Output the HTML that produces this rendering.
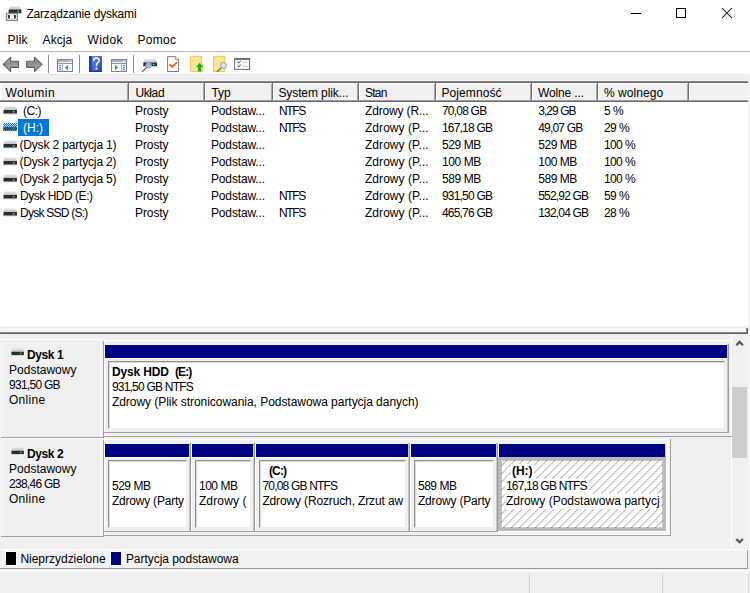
<!DOCTYPE html>
<html lang="pl"><head><meta charset="utf-8"><title>Zarządzanie dyskami</title>
<style>
html,body{margin:0;padding:0;}
body{width:750px;height:593px;position:relative;overflow:hidden;background:#fff;font-family:"Liberation Sans",sans-serif;font-size:12px;line-height:14px;color:#000;}
body div,body svg,body span{position:absolute;display:block;}
.t{white-space:pre;height:14px;}
</style></head><body>
<svg style="left:5px;top:5px" width="18" height="17" viewBox="0 0 18 17">
<defs><linearGradient id="tg" x1="0" y1="0" x2="0" y2="1"><stop offset="0" stop-color="#e4e7ea"/><stop offset="1" stop-color="#b9bec4"/></linearGradient></defs>
<path d="M5 1.2 L14.6 1.2 L16.3 4.8 L3.6 4.8 Z" fill="url(#tg)"/>
<rect x="3.6" y="4.6" width="12.8" height="3.6" rx="0.5" fill="#2e2e2e"/>
<rect x="3.6" y="8.1" width="12.8" height="0.7" fill="#c8ccd0"/>
<circle cx="13.4" cy="6.4" r="0.95" fill="#35e23a"/>
<rect x="1.3" y="8.3" width="11.2" height="7.2" fill="#dcdcdc" stroke="#858585" stroke-width="1.1"/>
<rect x="3.0" y="10.1" width="1.9" height="3.3" fill="#2a2a2a"/>
<rect x="8.9" y="10.1" width="1.9" height="3.3" fill="#2a2a2a"/>
<rect x="4.9" y="10.6" width="4" height="2.3" fill="#f6f6f6"/>
</svg>
<svg style="left:620px;top:0px" width="130" height="30" viewBox="0 0 130 30">
<path d="M11 13.5 H21" stroke="#000" stroke-width="1" fill="none"/>
<rect x="56.5" y="8.5" width="9" height="9" stroke="#000" stroke-width="1" fill="none"/>
<path d="M102 8 L112 18 M112 8 L102 18" stroke="#000" stroke-width="1.05" fill="none"/>
</svg>
<div style="left:0px;top:51px;width:750px;height:1px;background:#b9b9b9;"></div>
<div style="left:0px;top:74px;width:750px;height:8px;background:#f0f0f0;"></div>
<div style="left:0px;top:74px;width:750px;height:1px;background:#e6e6e6;"></div>
<div style="left:48px;top:55px;width:1px;height:18px;background:#8d8d8d;"></div>
<div style="left:79px;top:55px;width:1px;height:18px;background:#8d8d8d;"></div>
<div style="left:133px;top:55px;width:1px;height:18px;background:#8d8d8d;"></div>
<svg style="left:0px;top:52px" width="260" height="22" viewBox="0 0 260 22">
<defs>
<linearGradient id="ag" x1="0" y1="0" x2="0.3" y2="1"><stop offset="0" stop-color="#cfcfcf"/><stop offset="0.5" stop-color="#8c8c8c"/><stop offset="1" stop-color="#b0b0b0"/></linearGradient>
<linearGradient id="hg" x1="0" y1="0" x2="1" y2="1"><stop offset="0" stop-color="#7396ec"/><stop offset="0.5" stop-color="#4a6cd6"/><stop offset="1" stop-color="#2443ae"/></linearGradient>
<linearGradient id="dtg" x1="0" y1="0" x2="0" y2="1"><stop offset="0" stop-color="#e6e9ec"/><stop offset="1" stop-color="#bfc4c9"/></linearGradient>
</defs>
<!-- back / forward arrows -->
<path d="M3.3 12.3 L10.6 5.3 L10.6 9.2 L18 9.2 Q18.5 9.2 18.5 9.7 L18.5 14.9 Q18.5 15.4 18 15.4 L10.6 15.4 L10.6 19.4 Z" fill="url(#ag)" stroke="#5e5e5e" stroke-width="1.15" stroke-linejoin="round"/>
<path d="M41.9 12.3 L34.6 5.3 L34.6 9.2 L27.2 9.2 Q26.7 9.2 26.7 9.7 L26.7 14.9 Q26.7 15.4 27.2 15.4 L34.6 15.4 L34.6 19.4 Z" fill="url(#ag)" stroke="#5e5e5e" stroke-width="1.15" stroke-linejoin="round"/>
<!-- icon 1: console tree -->
<g>
<rect x="57.5" y="7.5" width="15" height="12" fill="#fff" stroke="#7d8693" stroke-width="1"/>
<rect x="58" y="8" width="14" height="2" fill="#aeb4bd"/>
<rect x="58" y="10.2" width="14" height="0.9" fill="#e9ecef"/>
<rect x="58" y="11" width="14" height="1" fill="#8d95a1"/>
<rect x="58" y="12" width="4.2" height="7" fill="#eef1f5"/>
<rect x="62.2" y="12" width="0.9" height="7" fill="#9aa2ad"/>
<rect x="59" y="13.2" width="2.2" height="1" fill="#3f7fd6"/><rect x="59" y="15.2" width="2.2" height="1" fill="#3f7fd6"/><rect x="59" y="17.2" width="2.2" height="1" fill="#3f7fd6"/>
<rect x="69" y="8.4" width="1" height="1" fill="#fff"/><rect x="70.8" y="8.4" width="1" height="1" fill="#fff"/>
<path d="M64.7 15.6 L68 12.8 L68 18.4 Z" fill="#3db53d"/>
</g>
<!-- help -->
<rect x="89" y="4" width="13" height="16" fill="url(#hg)"/>
<rect x="89" y="4" width="2.8" height="16" fill="#1f3fa3"/>
<rect x="89" y="19.2" width="13" height="0.8" fill="#1c3488"/>
<path d="M93.8 8.3 Q93.9 6 96.4 6 Q99 6 99 8.4 Q99 9.9 97.6 10.9 Q96.5 11.7 96.5 13.6" stroke="#f6f8ff" stroke-width="1.55" fill="none" stroke-linecap="round"/>
<circle cx="96.4" cy="16.6" r="1.15" fill="#fff"/>
<!-- icon 3 -->
<g>
<rect x="111.5" y="7.5" width="15" height="12" fill="#fff" stroke="#7d8693" stroke-width="1"/>
<rect x="112" y="8" width="14" height="2" fill="#aeb4bd"/>
<rect x="112" y="10.2" width="14" height="0.9" fill="#e9ecef"/>
<rect x="112" y="11" width="14" height="1" fill="#8d95a1"/>
<rect x="121.8" y="12" width="4.2" height="7" fill="#eef1f5"/>
<rect x="120.9" y="12" width="0.9" height="7" fill="#9aa2ad"/>
<rect x="122.8" y="13.2" width="2.2" height="1" fill="#3f7fd6"/><rect x="122.8" y="15.2" width="2.2" height="1" fill="#3f7fd6"/><rect x="122.8" y="17.2" width="2.2" height="1" fill="#3f7fd6"/>
<rect x="123" y="8.4" width="1" height="1" fill="#fff"/><rect x="124.8" y="8.4" width="1" height="1" fill="#fff"/>
<path d="M118.3 15.6 L115 12.8 L115 18.4 Z" fill="#3db53d"/>
</g>
<!-- icon 4: drive + magnifier -->
<path d="M144.4 7 L156 7 L157.2 10.8 L143.2 10.8 Z" fill="url(#dtg)"/>
<rect x="143.3" y="10.6" width="13.8" height="3.7" rx="0.4" fill="#2c2c2c"/>
<rect x="143.3" y="14.2" width="13.8" height="0.7" fill="#c9cdd1"/>
<circle cx="153.7" cy="12.4" r="1" fill="#2fe135"/>
<path d="M146.7 15.4 L142.4 19.6" stroke="#4f6070" stroke-width="1.3" stroke-linecap="round"/>
<circle cx="148.7" cy="13.2" r="2.9" fill="#9fc0df" fill-opacity="0.92" stroke="#6f8fb0" stroke-width="0.8"/>
<!-- icon 5: doc + check -->
<path d="M167.6 4.7 L175.6 4.7 L178.6 7.7 L178.6 19.5 L167.6 19.5 Z" fill="#fafafa" stroke="#7b7b7b" stroke-width="1"/>
<path d="M175.6 4.7 L175.6 7.7 L178.6 7.7" fill="#fff" stroke="#7b7b7b" stroke-width="0.8"/>
<path d="M169.6 12.4 L172.1 14.9 L177 10.4" stroke="#e8581d" stroke-width="1.7" fill="none"/>
<!-- icon 6: yellow page + green arrow -->
<path d="M190.4 4.3 L201.6 4.3 L201.6 12 L202.7 12 L202.7 19.5 L190.4 19.5 Z" fill="#ffe593" stroke="#e9c24a" stroke-width="0.9"/>
<path d="M199.6 10.8 L203.2 15 L201.3 15 L201.3 19.6 L197.9 19.6 L197.9 15 L196 15 Z" fill="#19b51b"/>
<!-- icon 7: yellow page + magnifier -->
<path d="M213.6 4.3 L224.8 4.3 L224.8 19.5 L213.6 19.5 Z" fill="#ffe593" stroke="#e9c24a" stroke-width="0.9"/>
<path d="M221.4 15.6 L217.3 19.5" stroke="#5d6c7a" stroke-width="1.2" stroke-linecap="round"/>
<circle cx="223.5" cy="13.4" r="3" fill="#d3e6f5" stroke="#8c9baa" stroke-width="0.9"/>
<!-- icon 8: checklist -->
<rect x="234.6" y="6.6" width="15" height="10.8" fill="#fff" stroke="#6c6c6c" stroke-width="1"/>
<rect x="234.6" y="6.4" width="15" height="1.6" fill="#6c6c6c"/>
<path d="M237.6 9.6 L238.8 10.8 L240.8 8.8" stroke="#2d7fe0" stroke-width="1.1" fill="none"/>
<path d="M237.6 13.6 L238.8 14.8 L240.8 12.8" stroke="#2d7fe0" stroke-width="1.1" fill="none"/>
<path d="M242.4 10.3 H247.4 M242.4 14.3 H247.4" stroke="#b8b8b8" stroke-width="0.9"/>
</svg>

<div style="left:0px;top:81px;width:748px;height:1px;background:#8c8c8c;"></div>
<div style="left:0px;top:82px;width:748px;height:1px;background:#636363;"></div>
<div style="left:748px;top:74px;width:2px;height:260px;background:#f0f0f0;"></div>
<div style="left:1px;top:83px;width:128px;height:18px;background:#f0f0f0;"></div>
<div style="left:1px;top:83px;width:127px;height:1px;background:#fff;"></div>
<div style="left:1px;top:83px;width:1px;height:17px;background:#fff;"></div>
<div style="left:128px;top:83px;width:1px;height:18px;background:#6f6f6f;"></div>
<div style="left:127px;top:84px;width:1px;height:16px;background:#a6a6a6;"></div>
<div style="left:129px;top:83px;width:76px;height:18px;background:#f0f0f0;"></div>
<div style="left:129px;top:83px;width:75px;height:1px;background:#fff;"></div>
<div style="left:129px;top:83px;width:1px;height:17px;background:#fff;"></div>
<div style="left:204px;top:83px;width:1px;height:18px;background:#6f6f6f;"></div>
<div style="left:203px;top:84px;width:1px;height:16px;background:#a6a6a6;"></div>
<div style="left:205px;top:83px;width:68px;height:18px;background:#f0f0f0;"></div>
<div style="left:205px;top:83px;width:67px;height:1px;background:#fff;"></div>
<div style="left:205px;top:83px;width:1px;height:17px;background:#fff;"></div>
<div style="left:272px;top:83px;width:1px;height:18px;background:#6f6f6f;"></div>
<div style="left:271px;top:84px;width:1px;height:16px;background:#a6a6a6;"></div>
<div style="left:273px;top:83px;width:86px;height:18px;background:#f0f0f0;"></div>
<div style="left:273px;top:83px;width:85px;height:1px;background:#fff;"></div>
<div style="left:273px;top:83px;width:1px;height:17px;background:#fff;"></div>
<div style="left:358px;top:83px;width:1px;height:18px;background:#6f6f6f;"></div>
<div style="left:357px;top:84px;width:1px;height:16px;background:#a6a6a6;"></div>
<div style="left:359px;top:83px;width:77px;height:18px;background:#f0f0f0;"></div>
<div style="left:359px;top:83px;width:76px;height:1px;background:#fff;"></div>
<div style="left:359px;top:83px;width:1px;height:17px;background:#fff;"></div>
<div style="left:435px;top:83px;width:1px;height:18px;background:#6f6f6f;"></div>
<div style="left:434px;top:84px;width:1px;height:16px;background:#a6a6a6;"></div>
<div style="left:436px;top:83px;width:96px;height:18px;background:#f0f0f0;"></div>
<div style="left:436px;top:83px;width:95px;height:1px;background:#fff;"></div>
<div style="left:436px;top:83px;width:1px;height:17px;background:#fff;"></div>
<div style="left:531px;top:83px;width:1px;height:18px;background:#6f6f6f;"></div>
<div style="left:530px;top:84px;width:1px;height:16px;background:#a6a6a6;"></div>
<div style="left:532px;top:83px;width:66px;height:18px;background:#f0f0f0;"></div>
<div style="left:532px;top:83px;width:65px;height:1px;background:#fff;"></div>
<div style="left:532px;top:83px;width:1px;height:17px;background:#fff;"></div>
<div style="left:597px;top:83px;width:1px;height:18px;background:#6f6f6f;"></div>
<div style="left:596px;top:84px;width:1px;height:16px;background:#a6a6a6;"></div>
<div style="left:598px;top:83px;width:91px;height:18px;background:#f0f0f0;"></div>
<div style="left:598px;top:83px;width:90px;height:1px;background:#fff;"></div>
<div style="left:598px;top:83px;width:1px;height:17px;background:#fff;"></div>
<div style="left:688px;top:83px;width:1px;height:18px;background:#6f6f6f;"></div>
<div style="left:687px;top:84px;width:1px;height:16px;background:#a6a6a6;"></div>
<div style="left:689px;top:83px;width:59px;height:18px;background:#f0f0f0;"></div>
<div style="left:689px;top:83px;width:58px;height:1px;background:#fff;"></div>
<div style="left:689px;top:83px;width:1px;height:17px;background:#fff;"></div>
<div style="left:0px;top:100px;width:748px;height:1px;background:#a0a0a0;"></div>
<div style="left:0px;top:101px;width:748px;height:1px;background:#6a6a6a;"></div>
<svg style="left:2.7px;top:105.7px" width="14.6" height="9" viewBox="0 0 15 9" preserveAspectRatio="none">
<defs><linearGradient id="dg1" x1="0" y1="0" x2="0" y2="1"><stop offset="0" stop-color="#e3e6e9"/><stop offset="1" stop-color="#bcc1c7"/></linearGradient></defs>
<path d="M1.6 0.4 L13.4 0.4 L14.6 4.2 L0.4 4.2 Z" fill="url(#dg1)"/>
<rect x="0.5" y="4" width="14" height="3.7" rx="0.5" fill="#2c2c2c"/>
<rect x="0.5" y="7.6" width="14" height="0.8" fill="#c9cdd1"/>
<circle cx="10.9" cy="5.8" r="0.95" fill="#2fe135"/>
</svg>
<div style="left:18px;top:119px;width:31px;height:17px;background:#0078d7;"></div>
<svg style="left:2.7px;top:122.7px" width="14.6" height="9" viewBox="0 0 15 9" preserveAspectRatio="none">
<defs><linearGradient id="dg2" x1="0" y1="0" x2="0" y2="1"><stop offset="0" stop-color="#e3e6e9"/><stop offset="1" stop-color="#bcc1c7"/></linearGradient></defs>
<path d="M1.6 0.4 L13.4 0.4 L14.6 4.2 L0.4 4.2 Z" fill="url(#dg2)"/>
<rect x="0.5" y="4" width="14" height="3.7" rx="0.5" fill="#2c2c2c"/>
<rect x="0.5" y="7.6" width="14" height="0.8" fill="#c9cdd1"/>
<circle cx="10.9" cy="5.8" r="0.95" fill="#2fe135"/>
</svg>
<div style="left:3px;top:123px;width:14.4px;height:8px;background-image:conic-gradient(#0078d7 25%, transparent 0 50%, #0078d7 0 75%, transparent 0);background-size:2px 2px;"></div>
<svg style="left:2.7px;top:139.7px" width="14.6" height="9" viewBox="0 0 15 9" preserveAspectRatio="none">
<defs><linearGradient id="dg3" x1="0" y1="0" x2="0" y2="1"><stop offset="0" stop-color="#e3e6e9"/><stop offset="1" stop-color="#bcc1c7"/></linearGradient></defs>
<path d="M1.6 0.4 L13.4 0.4 L14.6 4.2 L0.4 4.2 Z" fill="url(#dg3)"/>
<rect x="0.5" y="4" width="14" height="3.7" rx="0.5" fill="#2c2c2c"/>
<rect x="0.5" y="7.6" width="14" height="0.8" fill="#c9cdd1"/>
<circle cx="10.9" cy="5.8" r="0.95" fill="#2fe135"/>
</svg>
<svg style="left:2.7px;top:156.7px" width="14.6" height="9" viewBox="0 0 15 9" preserveAspectRatio="none">
<defs><linearGradient id="dg4" x1="0" y1="0" x2="0" y2="1"><stop offset="0" stop-color="#e3e6e9"/><stop offset="1" stop-color="#bcc1c7"/></linearGradient></defs>
<path d="M1.6 0.4 L13.4 0.4 L14.6 4.2 L0.4 4.2 Z" fill="url(#dg4)"/>
<rect x="0.5" y="4" width="14" height="3.7" rx="0.5" fill="#2c2c2c"/>
<rect x="0.5" y="7.6" width="14" height="0.8" fill="#c9cdd1"/>
<circle cx="10.9" cy="5.8" r="0.95" fill="#2fe135"/>
</svg>
<svg style="left:2.7px;top:173.7px" width="14.6" height="9" viewBox="0 0 15 9" preserveAspectRatio="none">
<defs><linearGradient id="dg5" x1="0" y1="0" x2="0" y2="1"><stop offset="0" stop-color="#e3e6e9"/><stop offset="1" stop-color="#bcc1c7"/></linearGradient></defs>
<path d="M1.6 0.4 L13.4 0.4 L14.6 4.2 L0.4 4.2 Z" fill="url(#dg5)"/>
<rect x="0.5" y="4" width="14" height="3.7" rx="0.5" fill="#2c2c2c"/>
<rect x="0.5" y="7.6" width="14" height="0.8" fill="#c9cdd1"/>
<circle cx="10.9" cy="5.8" r="0.95" fill="#2fe135"/>
</svg>
<svg style="left:2.7px;top:190.7px" width="14.6" height="9" viewBox="0 0 15 9" preserveAspectRatio="none">
<defs><linearGradient id="dg6" x1="0" y1="0" x2="0" y2="1"><stop offset="0" stop-color="#e3e6e9"/><stop offset="1" stop-color="#bcc1c7"/></linearGradient></defs>
<path d="M1.6 0.4 L13.4 0.4 L14.6 4.2 L0.4 4.2 Z" fill="url(#dg6)"/>
<rect x="0.5" y="4" width="14" height="3.7" rx="0.5" fill="#2c2c2c"/>
<rect x="0.5" y="7.6" width="14" height="0.8" fill="#c9cdd1"/>
<circle cx="10.9" cy="5.8" r="0.95" fill="#2fe135"/>
</svg>
<svg style="left:2.7px;top:207.7px" width="14.6" height="9" viewBox="0 0 15 9" preserveAspectRatio="none">
<defs><linearGradient id="dg7" x1="0" y1="0" x2="0" y2="1"><stop offset="0" stop-color="#e3e6e9"/><stop offset="1" stop-color="#bcc1c7"/></linearGradient></defs>
<path d="M1.6 0.4 L13.4 0.4 L14.6 4.2 L0.4 4.2 Z" fill="url(#dg7)"/>
<rect x="0.5" y="4" width="14" height="3.7" rx="0.5" fill="#2c2c2c"/>
<rect x="0.5" y="7.6" width="14" height="0.8" fill="#c9cdd1"/>
<circle cx="10.9" cy="5.8" r="0.95" fill="#2fe135"/>
</svg>
<div style="left:0px;top:326px;width:750px;height:24px;background:#f0f0f0;"></div>
<div style="left:1px;top:328px;width:745px;height:4px;background:#f7f7f7;"></div>
<div style="left:0px;top:332px;width:748px;height:1px;background:#868686;"></div>
<div style="left:0px;top:333px;width:748px;height:1px;background:#646464;"></div>
<div style="left:746px;top:328px;width:1px;height:5px;background:#8c8c8c;"></div>
<div style="left:747px;top:328px;width:1px;height:6px;background:#646464;"></div>
<div style="left:0px;top:334px;width:750px;height:259px;background:#f0f0f0;"></div>
<div style="left:732px;top:339px;width:16px;height:210px;background:#f0f0f0;"></div>
<div style="left:732px;top:387px;width:15px;height:71px;background:#cdcdcd;"></div>
<div style="left:731px;top:334px;width:1px;height:215px;background:#fff;"></div>
<div style="left:749px;top:83px;width:1px;height:466px;background:#f8f8f8;"></div>
<svg style="left:732px;top:339px" width="16" height="210" viewBox="0 0 16 210"><path d="M4.3 6.2 L7.6 2.9 L10.9 6.2" stroke="#575757" stroke-width="2.2" fill="none"/><path d="M4.3 200 L7.6 203.3 L10.9 200" stroke="#575757" stroke-width="2.2" fill="none"/></svg>
<div style="left:1px;top:339px;width:100px;height:1px;background:#fff;"></div>
<div style="left:1px;top:339px;width:1px;height:98px;background:#f8f8f8;"></div>
<div style="left:1px;top:437px;width:103px;height:1px;background:#a0a0a0;"></div>
<div style="left:100px;top:339px;width:1px;height:98px;background:#fff;"></div>
<div style="left:101px;top:339px;width:1px;height:98px;background:#f6f6f6;"></div>
<div style="left:103px;top:341px;width:1px;height:97px;background:#a0a0a0;"></div>
<div style="left:104px;top:341px;width:1px;height:95px;background:#fbfbfb;"></div>
<svg style="left:10.7px;top:347.8px" width="13.432" height="8.28" viewBox="0 0 15 9" preserveAspectRatio="none">
<defs><linearGradient id="dg8" x1="0" y1="0" x2="0" y2="1"><stop offset="0" stop-color="#e3e6e9"/><stop offset="1" stop-color="#bcc1c7"/></linearGradient></defs>
<path d="M1.6 0.4 L13.4 0.4 L14.6 4.2 L0.4 4.2 Z" fill="url(#dg8)"/>
<rect x="0.5" y="4" width="14" height="3.7" rx="0.5" fill="#2c2c2c"/>
<rect x="0.5" y="7.6" width="14" height="0.8" fill="#c9cdd1"/>
<circle cx="10.9" cy="5.8" r="0.95" fill="#2fe135"/>
</svg>
<div style="left:104px;top:340px;width:627px;height:1px;background:#fff;"></div>
<div style="left:104px;top:436px;width:628px;height:1px;background:#a3a3a3;"></div>
<div style="left:104px;top:345px;width:1px;height:87px;background:#fff;"></div>
<div style="left:105px;top:345px;width:622px;height:13px;background:#000082;"></div>
<div style="left:727px;top:344px;width:1px;height:89px;background:#c6c6c6;"></div>
<div style="left:728px;top:344px;width:1px;height:89px;background:#9a9a9a;"></div>
<div style="left:104px;top:432px;width:624px;height:1px;background:#a2a2a2;"></div>
<div style="left:105px;top:358px;width:622px;height:1px;background:#fff;"></div>
<div style="left:108px;top:361px;width:617px;height:68px;background:#fff;box-sizing:border-box;border-left:1px solid #8f8f8f;border-top:1px solid #8f8f8f;border-right:1px solid #ececec;border-bottom:1px solid #ececec;"></div>
<div style="left:109px;top:362px;width:615px;height:1px;background:#dadada;"></div>
<div style="left:109px;top:362px;width:1px;height:66px;background:#dadada;"></div>
<div style="left:1px;top:438px;width:100px;height:1px;background:#fff;"></div>
<div style="left:1px;top:438px;width:1px;height:98px;background:#f8f8f8;"></div>
<div style="left:1px;top:536px;width:103px;height:1px;background:#a0a0a0;"></div>
<div style="left:100px;top:438px;width:1px;height:98px;background:#fff;"></div>
<div style="left:101px;top:438px;width:1px;height:98px;background:#f6f6f6;"></div>
<div style="left:103px;top:440px;width:1px;height:97px;background:#a0a0a0;"></div>
<div style="left:104px;top:440px;width:1px;height:95px;background:#fbfbfb;"></div>
<svg style="left:10.7px;top:446.8px" width="13.432" height="8.28" viewBox="0 0 15 9" preserveAspectRatio="none">
<defs><linearGradient id="dg9" x1="0" y1="0" x2="0" y2="1"><stop offset="0" stop-color="#e3e6e9"/><stop offset="1" stop-color="#bcc1c7"/></linearGradient></defs>
<path d="M1.6 0.4 L13.4 0.4 L14.6 4.2 L0.4 4.2 Z" fill="url(#dg9)"/>
<rect x="0.5" y="4" width="14" height="3.7" rx="0.5" fill="#2c2c2c"/>
<rect x="0.5" y="7.6" width="14" height="0.8" fill="#c9cdd1"/>
<circle cx="10.9" cy="5.8" r="0.95" fill="#2fe135"/>
</svg>
<div style="left:104px;top:439px;width:566px;height:1px;background:#fff;"></div>
<div style="left:104px;top:535px;width:567px;height:1px;background:#a3a3a3;"></div>
<div style="left:104px;top:444px;width:1px;height:87px;background:#fff;"></div>
<div style="left:105px;top:444px;width:84px;height:13px;background:#000082;"></div>
<div style="left:189px;top:443px;width:1px;height:89px;background:#c6c6c6;"></div>
<div style="left:190px;top:443px;width:1px;height:89px;background:#9a9a9a;"></div>
<div style="left:104px;top:531px;width:86px;height:1px;background:#a2a2a2;"></div>
<div style="left:105px;top:457px;width:84px;height:1px;background:#fff;"></div>
<div style="left:108px;top:460px;width:79px;height:68px;background:#fff;box-sizing:border-box;border-left:1px solid #8f8f8f;border-top:1px solid #8f8f8f;border-right:1px solid #ececec;border-bottom:1px solid #ececec;"></div>
<div style="left:109px;top:461px;width:77px;height:1px;background:#dadada;"></div>
<div style="left:109px;top:461px;width:1px;height:66px;background:#dadada;"></div>
<div style="left:191px;top:444px;width:1px;height:87px;background:#fff;"></div>
<div style="left:192px;top:444px;width:61px;height:13px;background:#000082;"></div>
<div style="left:253px;top:443px;width:1px;height:89px;background:#c6c6c6;"></div>
<div style="left:254px;top:443px;width:1px;height:89px;background:#9a9a9a;"></div>
<div style="left:191px;top:531px;width:63px;height:1px;background:#a2a2a2;"></div>
<div style="left:192px;top:457px;width:61px;height:1px;background:#fff;"></div>
<div style="left:195px;top:460px;width:56px;height:68px;background:#fff;box-sizing:border-box;border-left:1px solid #8f8f8f;border-top:1px solid #8f8f8f;border-right:1px solid #ececec;border-bottom:1px solid #ececec;"></div>
<div style="left:196px;top:461px;width:54px;height:1px;background:#dadada;"></div>
<div style="left:196px;top:461px;width:1px;height:66px;background:#dadada;"></div>
<div style="left:255px;top:444px;width:1px;height:87px;background:#fff;"></div>
<div style="left:256px;top:444px;width:152px;height:13px;background:#000082;"></div>
<div style="left:408px;top:443px;width:1px;height:89px;background:#c6c6c6;"></div>
<div style="left:409px;top:443px;width:1px;height:89px;background:#9a9a9a;"></div>
<div style="left:255px;top:531px;width:154px;height:1px;background:#a2a2a2;"></div>
<div style="left:256px;top:457px;width:152px;height:1px;background:#fff;"></div>
<div style="left:259px;top:460px;width:147px;height:68px;background:#fff;box-sizing:border-box;border-left:1px solid #8f8f8f;border-top:1px solid #8f8f8f;border-right:1px solid #ececec;border-bottom:1px solid #ececec;"></div>
<div style="left:260px;top:461px;width:145px;height:1px;background:#dadada;"></div>
<div style="left:260px;top:461px;width:1px;height:66px;background:#dadada;"></div>
<div style="left:410px;top:444px;width:1px;height:87px;background:#fff;"></div>
<div style="left:411px;top:444px;width:85px;height:13px;background:#000082;"></div>
<div style="left:496px;top:443px;width:1px;height:89px;background:#c6c6c6;"></div>
<div style="left:497px;top:443px;width:1px;height:89px;background:#9a9a9a;"></div>
<div style="left:410px;top:531px;width:87px;height:1px;background:#a2a2a2;"></div>
<div style="left:411px;top:457px;width:85px;height:1px;background:#fff;"></div>
<div style="left:414px;top:460px;width:80px;height:68px;background:#fff;box-sizing:border-box;border-left:1px solid #8f8f8f;border-top:1px solid #8f8f8f;border-right:1px solid #ececec;border-bottom:1px solid #ececec;"></div>
<div style="left:415px;top:461px;width:78px;height:1px;background:#dadada;"></div>
<div style="left:415px;top:461px;width:1px;height:66px;background:#dadada;"></div>
<div style="left:498px;top:444px;width:1px;height:87px;background:#fff;"></div>
<div style="left:499px;top:444px;width:166px;height:13px;background:#000082;"></div>
<div style="left:665px;top:443px;width:1px;height:15px;background:#cfcdc6;"></div>
<div style="left:666px;top:440px;width:3px;height:91px;background:#fff;"></div>
<div style="left:670px;top:439px;width:1px;height:96px;background:#a0a0a0;"></div>
<div style="left:498px;top:531px;width:172px;height:4px;background:#fff;"></div>
<div style="left:498px;top:532px;width:170px;height:2px;background:#f4f4f4;"></div>
<div style="left:499px;top:457px;width:166px;height:1px;background:#fff;"></div>
<div style="left:498.4px;top:457.2px;width:167.3px;height:73.5px;box-sizing:border-box;border:solid #bababa;border-width:3.7px 3.3px 3.7px 3.9px;background:#fff;overflow:hidden"><svg style="left:0;top:0" width="170" height="80"><defs><pattern id="h" width="8" height="8" patternUnits="userSpaceOnUse" patternTransform="translate(6.3,0)"><path d="M-1 9 L9 -1 M-1 1 L1 -1 M7 9 L9 7" stroke="#868686" stroke-width="0.85"/></pattern></defs><rect width="170" height="80" fill="url(#h)"/></svg></div>
<div style="left:501.4px;top:460px;width:161.9px;height:67.9px;background:transparent;box-sizing:border-box;border:0.9px solid rgba(0,0,0,0.2);"></div>
<div style="left:511px;top:463.5px;width:22.5px;height:15px;background:#fff;"></div>
<div style="left:505px;top:478.5px;width:83.5px;height:15px;background:#fff;"></div>
<div style="left:505px;top:493.5px;width:155.5px;height:15px;background:#fff;"></div>
<div style="left:0px;top:549px;width:750px;height:1px;background:#fff;"></div>
<div style="left:1px;top:550px;width:746px;height:18px;background:#f2f2f2;"></div>
<div style="left:0px;top:568px;width:748px;height:1px;background:#9a9a9a;"></div>
<div style="left:747px;top:550px;width:1px;height:19px;background:#a0a0a0;"></div>
<div style="left:5px;top:551.4px;width:12px;height:14.4px;background:#fff;"></div>
<div style="left:110px;top:551.4px;width:12px;height:14.4px;background:#fff;"></div>
<div style="left:6px;top:552.4px;width:10px;height:12.6px;background:#000;"></div>
<div style="left:111px;top:552.4px;width:10px;height:12.6px;background:#000082;"></div>
<div style="left:0px;top:569px;width:750px;height:24px;background:#f0f0f0;"></div>
<div style="left:0px;top:570px;width:750px;height:1.5px;background:#fbfbfb;"></div>
<div style="left:529px;top:573px;width:1px;height:20px;background:#d4d4d4;"></div>
<div style="left:662px;top:573px;width:1px;height:20px;background:#d4d4d4;"></div>
<div style="left:748px;top:573px;width:1px;height:20px;background:#dcdcdc;"></div>
<span class="t" id="t0" style="left:26.40px;top:7.00px;letter-spacing:-0.177px;">Zarządzanie dyskami</span>
<span class="t" id="t1" style="left:7.40px;top:33.00px;letter-spacing:0.285px;">Plik</span>
<span class="t" id="t2" style="left:42.60px;top:33.00px;letter-spacing:0.089px;">Akcja</span>
<span class="t" id="t3" style="left:87.40px;top:33.00px;letter-spacing:0.464px;">Widok</span>
<span class="t" id="t4" style="left:137.60px;top:33.00px;letter-spacing:0.260px;">Pomoc</span>
<span class="t" id="t5" style="left:5.40px;top:86.00px;letter-spacing:0.455px;">Wolumin</span>
<span class="t" id="t6" style="left:135.40px;top:86.00px;letter-spacing:-0.372px;">Układ</span>
<span class="t" id="t7" style="left:211.40px;top:86.00px;letter-spacing:-0.072px;">Typ</span>
<span class="t" id="t8" style="left:278.40px;top:86.00px;letter-spacing:-0.089px;">System plik...</span>
<span class="t" id="t9" style="left:364.90px;top:86.00px;letter-spacing:-0.729px;">Stan</span>
<span class="t" id="t10" style="left:441.40px;top:86.00px;letter-spacing:0.103px;">Pojemność</span>
<span class="t" id="t11" style="left:537.90px;top:86.00px;letter-spacing:-0.118px;">Wolne ...</span>
<span class="t" id="t12" style="left:603.90px;top:86.00px;letter-spacing:0.060px;">% wolnego</span>
<span class="t" id="t13" style="left:22.90px;top:104.00px;letter-spacing:-0.433px;">(C:)</span>
<span class="t" id="t14" style="left:135.00px;top:104.00px;letter-spacing:-0.083px;">Prosty</span>
<span class="t" id="t15" style="left:211.00px;top:104.00px;letter-spacing:-0.153px;">Podstaw...</span>
<span class="t" id="t16" style="left:279.00px;top:104.00px;letter-spacing:-1.381px;">NTFS</span>
<span class="t" id="t17" style="left:365.00px;top:104.00px;letter-spacing:-0.159px;">Zdrowy (R...</span>
<span class="t" id="t18" style="left:441.90px;top:104.00px;letter-spacing:-0.772px;">70,08 GB</span>
<span class="t" id="t19" style="left:538.20px;top:104.00px;letter-spacing:-0.939px;">3,29 GB</span>
<span class="t" id="t20" style="left:603.90px;top:104.00px;letter-spacing:-0.494px;">5 %</span>
<span class="t" id="t21" style="left:22.90px;top:121.00px;letter-spacing:0.067px;color:#fff;">(H:)</span>
<span class="t" id="t22" style="left:135.00px;top:121.00px;letter-spacing:-0.083px;">Prosty</span>
<span class="t" id="t23" style="left:211.00px;top:121.00px;letter-spacing:-0.153px;">Podstaw...</span>
<span class="t" id="t24" style="left:279.00px;top:121.00px;letter-spacing:-1.381px;">NTFS</span>
<span class="t" id="t25" style="left:365.00px;top:121.00px;letter-spacing:0.042px;">Zdrowy (P...</span>
<span class="t" id="t26" style="left:441.90px;top:121.00px;letter-spacing:-0.784px;">167,18 GB</span>
<span class="t" id="t27" style="left:538.20px;top:121.00px;letter-spacing:-0.815px;">49,07 GB</span>
<span class="t" id="t28" style="left:603.90px;top:121.00px;letter-spacing:-0.553px;">29 %</span>
<span class="t" id="t29" style="left:19.40px;top:138.00px;letter-spacing:-0.157px;">(Dysk 2 partycja 1)</span>
<span class="t" id="t30" style="left:135.00px;top:138.00px;letter-spacing:-0.083px;">Prosty</span>
<span class="t" id="t31" style="left:211.00px;top:138.00px;letter-spacing:-0.153px;">Podstaw...</span>
<span class="t" id="t32" style="left:365.00px;top:138.00px;letter-spacing:0.042px;">Zdrowy (P...</span>
<span class="t" id="t33" style="left:441.90px;top:138.00px;letter-spacing:-0.392px;">529 MB</span>
<span class="t" id="t34" style="left:538.20px;top:138.00px;letter-spacing:-0.452px;">529 MB</span>
<span class="t" id="t35" style="left:603.90px;top:138.00px;letter-spacing:-0.583px;">100 %</span>
<span class="t" id="t36" style="left:19.40px;top:155.00px;letter-spacing:-0.157px;">(Dysk 2 partycja 2)</span>
<span class="t" id="t37" style="left:135.00px;top:155.00px;letter-spacing:-0.083px;">Prosty</span>
<span class="t" id="t38" style="left:211.00px;top:155.00px;letter-spacing:-0.153px;">Podstaw...</span>
<span class="t" id="t39" style="left:365.00px;top:155.00px;letter-spacing:0.042px;">Zdrowy (P...</span>
<span class="t" id="t40" style="left:441.90px;top:155.00px;letter-spacing:-0.392px;">100 MB</span>
<span class="t" id="t41" style="left:538.20px;top:155.00px;letter-spacing:-0.452px;">100 MB</span>
<span class="t" id="t42" style="left:603.90px;top:155.00px;letter-spacing:-0.583px;">100 %</span>
<span class="t" id="t43" style="left:19.40px;top:172.00px;letter-spacing:-0.157px;">(Dysk 2 partycja 5)</span>
<span class="t" id="t44" style="left:135.00px;top:172.00px;letter-spacing:-0.083px;">Prosty</span>
<span class="t" id="t45" style="left:211.00px;top:172.00px;letter-spacing:-0.153px;">Podstaw...</span>
<span class="t" id="t46" style="left:365.00px;top:172.00px;letter-spacing:0.042px;">Zdrowy (P...</span>
<span class="t" id="t47" style="left:441.90px;top:172.00px;letter-spacing:-0.392px;">589 MB</span>
<span class="t" id="t48" style="left:538.20px;top:172.00px;letter-spacing:-0.452px;">589 MB</span>
<span class="t" id="t49" style="left:603.90px;top:172.00px;letter-spacing:-0.583px;">100 %</span>
<span class="t" id="t50" style="left:20.00px;top:189.00px;letter-spacing:-0.473px;">Dysk HDD (E:)</span>
<span class="t" id="t51" style="left:135.00px;top:189.00px;letter-spacing:-0.083px;">Prosty</span>
<span class="t" id="t52" style="left:211.00px;top:189.00px;letter-spacing:-0.153px;">Podstaw...</span>
<span class="t" id="t53" style="left:279.00px;top:189.00px;letter-spacing:-1.381px;">NTFS</span>
<span class="t" id="t54" style="left:365.00px;top:189.00px;letter-spacing:0.042px;">Zdrowy (P...</span>
<span class="t" id="t55" style="left:441.90px;top:189.00px;letter-spacing:-0.784px;">931,50 GB</span>
<span class="t" id="t56" style="left:538.20px;top:189.00px;letter-spacing:-0.809px;">552,92 GB</span>
<span class="t" id="t57" style="left:603.90px;top:189.00px;letter-spacing:-0.553px;">59 %</span>
<span class="t" id="t58" style="left:20.00px;top:206.00px;letter-spacing:-0.762px;">Dysk SSD (S:)</span>
<span class="t" id="t59" style="left:135.00px;top:206.00px;letter-spacing:-0.083px;">Prosty</span>
<span class="t" id="t60" style="left:211.00px;top:206.00px;letter-spacing:-0.153px;">Podstaw...</span>
<span class="t" id="t61" style="left:279.00px;top:206.00px;letter-spacing:-1.381px;">NTFS</span>
<span class="t" id="t62" style="left:365.00px;top:206.00px;letter-spacing:0.042px;">Zdrowy (P...</span>
<span class="t" id="t63" style="left:441.90px;top:206.00px;letter-spacing:-0.784px;">465,76 GB</span>
<span class="t" id="t64" style="left:538.20px;top:206.00px;letter-spacing:-0.809px;">132,04 GB</span>
<span class="t" id="t65" style="left:603.90px;top:206.00px;letter-spacing:-0.553px;">28 %</span>
<span class="t" id="t66" style="left:27.10px;top:348.00px;letter-spacing:-0.421px;font-weight:bold;">Dysk 1</span>
<span class="t" id="t67" style="left:9.00px;top:363.00px;letter-spacing:0.014px;">Podstawowy</span>
<span class="t" id="t68" style="left:9.00px;top:378.00px;letter-spacing:-0.722px;">931,50 GB</span>
<span class="t" id="t69" style="left:9.00px;top:393.00px;letter-spacing:0.283px;">Online</span>
<span class="t" id="t70" style="left:112.00px;top:365.00px;letter-spacing:-0.147px;font-weight:bold;">Dysk HDD</span>
<span class="t" id="t71" style="left:175.00px;top:365.00px;letter-spacing:-0.933px;font-weight:bold;">(E:)</span>
<span class="t" id="t72" style="left:111.90px;top:380.00px;letter-spacing:-0.781px;">931,50 GB NTFS</span>
<span class="t" id="t73" style="left:111.90px;top:395.00px;letter-spacing:-0.039px;">Zdrowy (Plik stronicowania, Podstawowa partycja danych)</span>
<span class="t" id="t74" style="left:27.10px;top:447.00px;letter-spacing:-0.421px;font-weight:bold;">Dysk 2</span>
<span class="t" id="t75" style="left:9.00px;top:462.00px;letter-spacing:0.014px;">Podstawowy</span>
<span class="t" id="t76" style="left:9.00px;top:477.00px;letter-spacing:-0.722px;">238,46 GB</span>
<span class="t" id="t77" style="left:9.00px;top:492.00px;letter-spacing:0.283px;">Online</span>
<span class="t" id="t78" style="left:111.90px;top:479.00px;letter-spacing:-0.432px;">529 MB</span>
<span class="t" id="t79" style="left:111.90px;top:494.00px;letter-spacing:-0.207px;">Zdrowy (Party</span>
<span class="t" id="t80" style="left:198.90px;top:479.00px;letter-spacing:-0.432px;">100 MB</span>
<span class="t" id="t81" style="left:198.90px;top:494.00px;letter-spacing:0.147px;">Zdrowy (</span>
<span class="t" id="t82" style="left:268.90px;top:464.00px;letter-spacing:-0.819px;font-weight:bold;">(C:)</span>
<span class="t" id="t83" style="left:262.40px;top:479.00px;letter-spacing:-0.806px;">70,08 GB NTFS</span>
<span class="t" id="t84" style="left:262.40px;top:494.00px;letter-spacing:-0.139px;">Zdrowy (Rozruch, Zrzut aw</span>
<span class="t" id="t85" style="left:417.90px;top:479.00px;letter-spacing:-0.432px;">589 MB</span>
<span class="t" id="t86" style="left:417.90px;top:494.00px;letter-spacing:-0.166px;">Zdrowy (Party</span>
<span class="t" id="t87" style="left:511.90px;top:464.00px;letter-spacing:0.015px;font-weight:bold;">(H:)</span>
<span class="t" id="t88" style="left:505.90px;top:479.00px;letter-spacing:-0.796px;">167,18 GB NTFS</span>
<span class="t" id="t89" style="left:505.90px;top:494.00px;letter-spacing:0.012px;">Zdrowy (Podstawowa partycj</span>
<span class="t" id="t90" style="left:20.40px;top:552.00px;letter-spacing:-0.014px;">Nieprzydzielone</span>
<span class="t" id="t91" style="left:125.90px;top:552.00px;letter-spacing:-0.038px;">Partycja podstawowa</span>
</body></html>
